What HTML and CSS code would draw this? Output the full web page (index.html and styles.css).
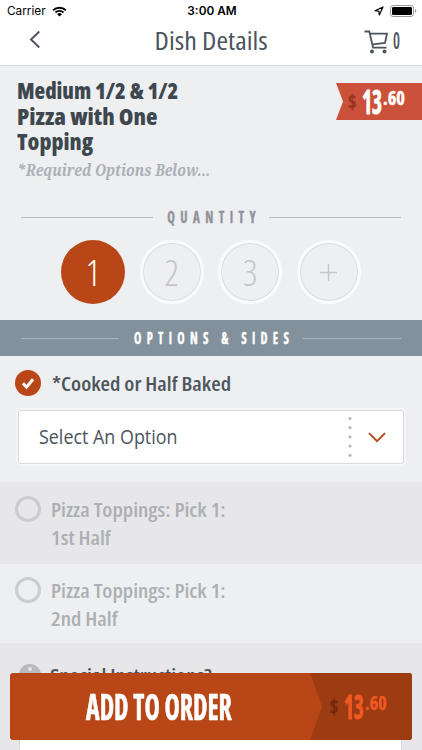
FILE: index.html
```html
<!DOCTYPE html>
<html>
<head>
	<meta charset="utf-8">
	<meta name="viewport" content="width=device-width, initial-scale=1">
<title>Dish Details</title>
<link rel="stylesheet" href="styles.css">
</head>
<body>

<div class="status">
	<div class="net">
		<span>Carrier</span>
		<svg class="wifi" width="15" height="11" viewBox="0 0 16 11">
			<path d="M1.2 4.2a9.8 9.8 0 0 1 13.6 0M3.7 6.6a6.2 6.2 0 0 1 8.6 0" fill="none" stroke="#000" stroke-width="2"/>
			<path d="M5.4 8.3a3.8 3.8 0 0 1 5.2 0L8 10.9z"/>
		</svg>
	</div>
	<span class="clock">3:00 AM</span>
	<div class="power">
		<svg class="arrow" width="10" height="10" viewBox="0 0 10 10">
			<path d="M9 1L1 4.700l3.800.5.500 3.800z" fill="none" stroke="#000" stroke-width="1.200" stroke-linejoin="round"/>
		</svg>
		<svg width="27" height="12" viewBox="0 0 27 12">
			<rect x=".5" y=".5" width="23" height="11" rx="2.600" fill="none" stroke="#999"/>
			<rect x="2" y="2" width="20" height="8" rx="1.300"/>
			<path d="M25 4v4q1.300-.6 1.300-2T25 4" fill="#999"/>
		</svg>
	</div>
</div>

<div class="bar">
	<svg width="12" height="19" viewBox="0 0 12 19">
		<path d="M10.300 1.500L2 9.500l8.300 8" fill="none" stroke="#4c555d" stroke-width="1.900"/>
	</svg>
	<h1>Dish Details</h1>
	<div class="cart">
		<svg width="25" height="24" viewBox="0 0 25 24">
			<path d="M.5 1.500h4.800l3.700 16.200h13.500M6 3.700h17l-2 9.300-12 1.400" fill="none" stroke="#4c555d" stroke-width="1.800"/>
			<circle cx="8" cy="21.500" r="2" fill="#4c555d"/>
			<circle cx="20.500" cy="21.500" r="2" fill="#4c555d"/>
		</svg>
		<span class="fit count">0</span>
	</div>
</div>

<div class="dish">
	<div class="top">
		<div>
			<h2>
				<span class="fit name1">Medium 1/2 &amp; 1/2</span>
				<span class="fit name2">Pizza with One</span>
				<span class="fit name3">Topping</span>
			</h2>
			<p class="fit req">*Required Options Below...</p>
		</div>
		<div class="tag">
			<span class="fit cur">$</span><span class="fit num">13</span><span class="fit dec">.60</span>
		</div>
	</div>

	<div class="rule quantity"><i></i><span>QUANTITY</span><i></i></div>

	<div class="qty">
		<div class="q on">1</div>
		<div class="q">2</div>
		<div class="q">3</div>
		<div class="q">
			<svg width="17" height="17" viewBox="0 0 17 17"><path d="M8.500 0v17M0 8.500h17" stroke="#c3c6cd" stroke-width="1.500"/></svg>
		</div>
	</div>
</div>

<div class="rule options"><i></i><span>OPTIONS &amp; SIDES</span><i></i></div>

<div class="row cooked">
	<div class="label">
		<svg width="26" height="26" viewBox="0 0 26 26">
			<circle cx="13" cy="13" r="13" fill="#b94617"/>
			<path d="M8 13.200l3.500 4L18 9.300" fill="none" stroke="#fff" stroke-width="3"/>
		</svg>
		<span class="fit wide">*Cooked or Half Baked</span>
	</div>
	<div class="select">
		<span class="fit">Select An Option</span>
		<svg class="dots" width="4" height="42" viewBox="0 0 4 42">
			<g fill="#b9babd">
				<circle cx="2" cy="2.500" r="1.600"/><circle cx="2" cy="11.700" r="1.600"/><circle cx="2" cy="20.900" r="1.600"/><circle cx="2" cy="30.100" r="1.600"/><circle cx="2" cy="39.300" r="1.600"/>
			</g>
		</svg>
		<svg width="18" height="11" viewBox="0 0 18 11">
			<path d="M1 1.200l8 8 8-8" fill="none" stroke="#b94617" stroke-width="1.900"/>
		</svg>
	</div>
</div>

<div class="row dark pick">
	<div class="ring"></div>
	<div class="fit wide">
		Pizza Toppings: Pick 1:<br>
		1st Half
	</div>
</div>

<div class="row pick last">
	<div class="ring"></div>
	<div class="fit wide">
		Pizza Toppings: Pick 1:<br>
		2nd Half
	</div>
</div>

<div class="row dark special">
	<div class="label">
		<svg width="22" height="22" viewBox="0 0 22 22">
			<circle cx="11" cy="11" r="11" fill="#b9babd"/>
			<circle cx="11" cy="5" r="2" fill="#e7e7e9"/>
			<path d="M8 9h5v7h2v2H8v-2h2v-5H8z" fill="#e7e7e9"/>
		</svg>
		<span class="fit wide">Special Instructions?</span>
	</div>
	<div class="note"></div>
</div>

<div class="order">
	<div class="add"><span class="fit">ADD TO ORDER</span></div>
	<div class="total">
		<span class="fit cur">$</span><span class="fit num">13</span><span class="fit dec">.60</span>
	</div>
</div>

</body>
</html>
```

FILE: styles.css
```css
*{
	box-sizing:border-box;
}
body{
	margin:0;
	height:750px;
	overflow:hidden;
	background:#eeeff1;
	color:#4c555d;
	font-family:"Open Sans","Noto Sans",sans-serif;
	font-stretch:75%;
}
h1,h2,p{
	margin:0;
	font-weight:400;
}
svg{
	display:block;
	flex:none;
}
/* text squeezed or widened from its left edge */
.fit{
	display:inline-block;
	white-space:nowrap;
	transform-origin:0 50%;
}
.wide{
	transform:scaleX(1.083);
}

.status{
	display:grid;
	grid-template-columns:1fr auto 1fr;
	align-items:center;
	height:22px;
	background:#fff;
	color:#000;
	font:11.8px/22px Inter,sans-serif;
	padding:0 5px 0 7px;
}
.net,.power{
	display:flex;
	align-items:center;
}
.power{
	justify-content:flex-end;
}
.wifi{
	margin-left:6px;
}
.clock{
	font-weight:600;
}
.arrow{
	margin-right:6px;
}

.bar{
	display:flex;
	align-items:center;
	height:44px;
	background:#fff;
	border-bottom:1px solid #d8d9dc;
	padding:0 21px 8px 29px;
}
.bar h1{
	flex:1;
	text-align:center;
	padding-left:16px;
	font-size:26px;
	line-height:36px;
	transform:scaleX(1.08);
}
.cart{
	display:flex;
	align-items:center;
	gap:4px;
	width:37px;
	height:34px;
}
.cart svg{
	margin-top:5px;
}
.count{
	font-size:23px;
	font-weight:600;
	line-height:34px;
	width:8px;
	transform:scaleX(.68);
}

.dish{
	height:254px;
}
.top{
	display:flex;
	justify-content:space-between;
	padding:12px 0 0 17px;
	height:130px;
}
.top h2{
	color:#3e474e;
	font-size:22.5px;
	font-weight:800;
	line-height:25.5px;
}
.top h2 .fit{
	display:block;
}
.name1{
	transform:scaleX(.97);
}
.name2{
	transform:scaleX(1.05);
}
.name3{
	transform:scaleX(1.02);
}
.req{
	margin-top:2px;
	font:italic bold 16px/26px "Noto Serif","Liberation Serif",serif;
	color:#acb0b5;
	width:193px;
	transform:scaleX(.885);
}
.tag{
	width:86px;
	height:37px;
	margin-top:5px;
	background:#cb513b;
	clip-path:polygon(0 0,100% 0,100% 100%,0 100%,7px 50%);
	padding-left:12px;
	color:#fff;
}
.tag,.total{
	display:flex;
	align-items:center;
	font-weight:700;
	-webkit-text-stroke:.4px;
}
.cur{
	font-size:20px;
	color:#97341f;
	width:14px;
	transform:scaleX(.9);
}
.num{
	font-size:34px;
	line-height:37px;
	width:21px;
	transform:scaleX(.63);
	-webkit-text-stroke:.9px;
}
.dec{
	font-size:20px;
	line-height:20px;
	margin-top:-8px;
	transform:scaleX(.92);
}

.rule{
	display:flex;
	align-items:center;
	justify-content:space-between;
	padding:0 21px;
	font-weight:700;
}
.rule i{
	flex:none;
	width:132px;
	height:1px;
	background:#b9bcc2;
}
.rule span{
	white-space:nowrap;
	letter-spacing:7px;
	margin:-1px -27px 0 -20px;
	transform:scaleX(.78);
	-webkit-text-stroke:.4px;
}
.quantity{
	height:42px;
	font-size:16.5px;
	color:#909299;
}
.options{
	height:36px;
	background:#82919c;
	color:#fff;
	font-size:16.5px;
}
.options i{
	width:98px;
	background:#aab5bd;
}
.options span{
	transform:scaleX(.755);
}
.qty{
	display:flex;
	gap:14.6px;
	padding:2px 0 0 61px;
}
.q{
	width:64px;
	height:64px;
	border-radius:50%;
	border:3px solid #f9fafb;
	box-shadow:inset 0 0 0 1px #d9dadd;
	display:flex;
	align-items:center;
	justify-content:center;
	font-size:36px;
	font-weight:300;
	color:#c3c6cd;
}
.q.on{
	background:#b94617;
	border:0;
	box-shadow:none;
	color:#fff;
}

.row{
	color:#4c555d;
	font-weight:600;
}
.dark{
	background:#e7e7e9;
}
.cooked{
	height:126px;
	padding:14px 18px 0 15px;
}
.label{
	display:flex;
	align-items:center;
	height:26px;
	gap:11px;
	font-size:20px;
}
.select{
	display:flex;
	align-items:center;
	height:54px;
	margin:14px 0 0 3px;
	padding:0 17px 0 20px;
	background:#fff;
	border:1px solid #d9dadd;
	border-radius:3px;
	box-shadow:0 0 0 2px #f5f5f7;
	font-size:20px;
	font-stretch:100%;
	font-weight:400;
}
.select .fit{
	padding-bottom:1px;
	transform:scaleX(.895);
}
.dots{
	margin-left:auto;
	margin-right:16px;
}
.pick{
	display:flex;
	gap:10px;
	height:82px;
	padding:14px 15px;
	color:#acafb3;
	font-size:20px;
	line-height:28px;
}
.last{
	height:79px;
	padding-top:13px;
}
.ring{
	width:26px;
	height:26px;
	border:3px solid #cbcccf;
	border-radius:50%;
}
.special{
	height:107px;
	padding:19px 20px 0 19px;
}
.special .label{
	gap:9px;
}
.note{
	height:70px;
	background:#fff;
	border:1px solid #d9dadd;
	margin-top:10px;
}

.order{
	position:fixed;
	left:10px;
	top:673px;
	width:402px;
	height:67px;
	display:flex;
	border-radius:3px;
	overflow:hidden;
	background:#b94617;
	color:#fff;
}
.add{
	width:300px;
	padding-left:76px;
	font-size:36px;
	line-height:67px;
	font-weight:700;
	-webkit-text-stroke:.6px;
}
.add .fit{
	transform:scaleX(.72);
}
.total{
	width:102px;
	background:#9d3b13;
	clip-path:polygon(0 0,100% 0,100% 100%,0 100%,12px 50%);
	color:#f05a22;
	padding-left:20px;
}
.total .cur{
	color:#71280c;
}
```
